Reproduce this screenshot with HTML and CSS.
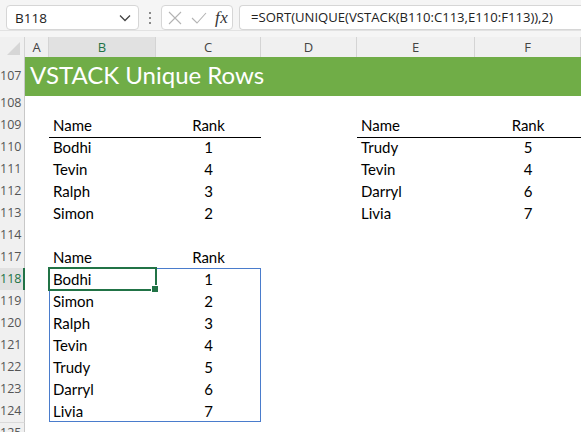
FILE: index.html
```html
<!DOCTYPE html>
<html>
<head>
<meta charset="utf-8">
<link rel="stylesheet" href="styles.css">
</head>
<body>
<div class="topbar">
  <div class="namebox">
    <span class="nb-text">B118</span>
    <svg class="chev" width="12" height="8" viewBox="0 0 12 8"><path d="M1 1.5 L6 6.5 L11 1.5" fill="none" stroke="#444" stroke-width="1.3"/></svg>
  </div>
  <div class="dots"><i></i><i></i><i></i></div>
  <div class="fxbtns">
    <svg width="14" height="14" viewBox="0 0 14 14"><path d="M1 1 L13 13 M13 1 L1 13" stroke="#b3b3b3" stroke-width="1.1" fill="none"/></svg>
    <svg width="16" height="14" viewBox="0 0 16 14"><path d="M1 7 L6 12 L15 2" stroke="#b3b3b3" stroke-width="1.1" fill="none"/></svg>
    <span class="fx">fx</span>
  </div>
  <div class="formula">=SORT(UNIQUE(VSTACK(B110:C113,E110:F113)),2)</div>
</div>
<div class="sheet">
  <div class="row colheads">
    <div class="corner"><svg width="16" height="16" viewBox="0 0 16 16"><path d="M15 2 L15 15 L2 15 Z" fill="#d6d6d6"/></svg></div>
    <div class="ch">A</div>
    <div class="ch sel">B</div>
    <div class="ch">C</div>
    <div class="ch">D</div>
    <div class="ch">E</div>
    <div class="ch">F</div>
  </div>
  <div class="row title-row">
    <div class="rh">107</div>
    <div class="title">VSTACK Unique Rows</div>
  </div>
  <div class="row"><div class="rh">108</div></div>
  <div class="row">
    <div class="rh">109</div><div></div>
    <div class="c txt hd">Name</div><div class="c num hd">Rank</div><div></div>
    <div class="c txt hd">Name</div><div class="c num hd">Rank</div>
  </div>
  <div class="row">
    <div class="rh">110</div><div></div>
    <div class="c txt">Bodhi</div><div class="c num">1</div><div></div>
    <div class="c txt">Trudy</div><div class="c num">5</div>
  </div>
  <div class="row">
    <div class="rh">111</div><div></div>
    <div class="c txt">Tevin</div><div class="c num">4</div><div></div>
    <div class="c txt">Tevin</div><div class="c num">4</div>
  </div>
  <div class="row">
    <div class="rh">112</div><div></div>
    <div class="c txt">Ralph</div><div class="c num">3</div><div></div>
    <div class="c txt">Darryl</div><div class="c num">6</div>
  </div>
  <div class="row">
    <div class="rh">113</div><div></div>
    <div class="c txt">Simon</div><div class="c num">2</div><div></div>
    <div class="c txt">Livia</div><div class="c num">7</div>
  </div>
  <div class="row"><div class="rh">114</div></div>
  <div class="row">
    <div class="rh">117</div><div></div>
    <div class="c txt">Name</div><div class="c num">Rank</div>
  </div>
  <div class="spill-wrap">
    <div class="spill"></div>
    <div class="active"><span class="handle"></span></div>
    <div class="row">
      <div class="rh rsel">118</div><div></div>
      <div class="c txt">Bodhi</div><div class="c num">1</div>
    </div>
    <div class="row">
      <div class="rh">119</div><div></div>
      <div class="c txt">Simon</div><div class="c num">2</div>
    </div>
    <div class="row">
      <div class="rh">120</div><div></div>
      <div class="c txt">Ralph</div><div class="c num">3</div>
    </div>
    <div class="row">
      <div class="rh">121</div><div></div>
      <div class="c txt">Tevin</div><div class="c num">4</div>
    </div>
    <div class="row">
      <div class="rh">122</div><div></div>
      <div class="c txt">Trudy</div><div class="c num">5</div>
    </div>
    <div class="row">
      <div class="rh">123</div><div></div>
      <div class="c txt">Darryl</div><div class="c num">6</div>
    </div>
    <div class="row">
      <div class="rh">124</div><div></div>
      <div class="c txt">Livia</div><div class="c num">7</div>
    </div>
  </div>
  <div class="row"><div class="rh">125</div></div>
</div>
</body>
</html>
```

FILE: styles.css
```css
html, body {
  margin: 0;
  padding: 0;
  background: #ffffff;
  overflow: hidden;
}
body {
  width: 581px;
  height: 432px;
  font-family: Lato, "Liberation Sans", sans-serif;
}
.topbar {
  height: 31px;
  box-sizing: border-box;
  background: #f5f5f5;
  border-bottom: 1px solid #e2e2e2;
  display: flex;
  align-items: flex-start;
  padding-top: 5px;
  padding-left: 6px;
}
.namebox {
  width: 133px;
  height: 25px;
  box-sizing: border-box;
  background: #fff;
  border: 1px solid #d6d6d6;
  border-radius: 4px;
  display: flex;
  align-items: center;
  justify-content: space-between;
  padding: 0 7px 0 8px;
  font-family: "Open Sans", "Noto Sans", sans-serif;
  font-size: 13.5px;
  color: #222;
}
.chev { margin-top: 1px; }
.dots {
  width: 22px;
  display: flex;
  flex-direction: column;
  align-items: center;
  gap: 3px;
  padding-top: 7px;
}
.dots i {
  display: block;
  width: 2px;
  height: 2px;
  background: #8a8a8a;
}
.fxbtns {
  width: 72px;
  height: 25px;
  box-sizing: border-box;
  background: #fff;
  border: 1px solid #d6d6d6;
  border-radius: 4px;
  display: flex;
  align-items: center;
  gap: 9px;
  padding-left: 6px;
}
.fx {
  font-family: "Liberation Serif", serif;
  font-style: italic;
  font-size: 17px;
  color: #333;
  margin-left: -1px;
  letter-spacing: 0.5px;
}
.formula {
  margin-left: 6px;
  flex: 1;
  height: 25px;
  box-sizing: border-box;
  background: #fff;
  border: 1px solid #d6d6d6;
  border-right: none;
  border-radius: 4px 0 0 4px;
  padding-left: 11px;
  font-family: "Open Sans", "Noto Sans", sans-serif;
  font-size: 13.1px;
  line-height: 23px;
  color: #222;
  white-space: nowrap;
}
.sheet {
  padding-top: 6px;
  background: #f5f5f5;
}
.row {
  display: grid;
  grid-template-columns: 25px 24px 107px 105px 96px 118px 106px;
  height: 22px;
  background: #fff;
}
.colheads {
  height: 20px;
  background: #f0f0f0;
}
.corner {
  border-bottom: 1px solid #c8c8c8;
  border-right: 1px solid #d4d4d4;
  display: flex;
  align-items: flex-end;
  justify-content: flex-end;
  padding: 0 3px 2px 0;
  box-sizing: border-box;
}
.ch {
  box-sizing: border-box;
  border-right: 1px solid #d4d4d4;
  border-bottom: 1px solid #c8c8c8;
  font-family: "Open Sans", "Noto Sans", sans-serif;
  font-size: 13px;
  color: #444;
  text-align: center;
  line-height: 20px;
}
.ch.sel {
  background: #e1e1e1;
  color: #217346;
  border-bottom: 2px solid #217346;
}
.rh {
  box-sizing: border-box;
  background: #f0f0f0;
  border-right: 1px solid #c8c8c8;
  border-bottom: 1px solid #dadada;
  font-family: "Open Sans", "Noto Sans", sans-serif;
  font-size: 12.5px;
  color: #555;
  text-align: right;
  padding-right: 3px;
  line-height: 22px;
}
.rh.rsel {
  background: #e1e1e1;
  color: #217346;
  border-right: 2px solid #217346;
}
.title-row {
  height: 35px;
}
.title-row .rh {
  line-height: 38px;
}
.title {
  grid-column: 2 / 8;
  background: #70ad47;
  color: #fff;
  font-size: 24px;
  line-height: 36px;
  padding-left: 5px;
  white-space: nowrap;
}
.c {
  font-size: 15px;
  line-height: 23px;
  color: #000;
  white-space: nowrap;
}
.txt { padding-left: 4px; }
.num { text-align: center; }
.hd { border-bottom: 1px solid #000; }
.spill-wrap {
  position: relative;
}
.spill {
  position: absolute;
  left: 49px;
  top: 0;
  width: 212px;
  height: 154px;
  box-sizing: border-box;
  border: 1px solid #4a7ccc;
  pointer-events: none;
}
.active {
  position: absolute;
  left: 48px;
  top: -1px;
  width: 109px;
  height: 24px;
  box-sizing: border-box;
  border: 2px solid #217346;
  z-index: 2;
}
.handle {
  position: absolute;
  right: -4px;
  bottom: -4px;
  width: 6px;
  height: 6px;
  background: #217346;
  border: 1px solid #fff;
}
```
